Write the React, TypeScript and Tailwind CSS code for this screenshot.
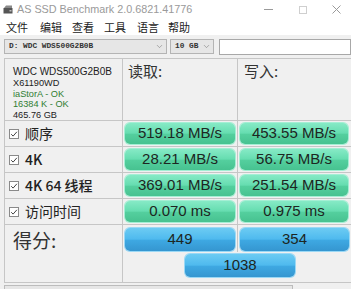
import { ChevronDown } from "lucide-react";

const cjk = "font-['Noto_Sans_CJK_SC',sans-serif]";
const sans = "font-['Liberation_Sans','Noto_Sans_CJK_SC',sans-serif]";

const green =
    "bg-[linear-gradient(to_bottom,#86eac6_0%,#66ddb0_48%,#54cf9e_54%,#47c290_100%)] shadow-[0_0_0_1px_#a4efd4]";
const blue =
    "bg-[linear-gradient(to_bottom,#6ccbf3_0%,#4fbaee_48%,#3ea8e2_54%,#3596d0_100%)] shadow-[0_0_0_1px_#9ad8f5]";

const Bar = ({ value, score = false }: { value: string; score?: boolean }) => (
    <div
        className={`h-full rounded-[5px] flex items-center justify-center text-[15px] text-[#1d2622] ${sans} ${score ? blue : green}`}
    >
        {value}
    </div>
);

const Check = () => (
    <svg width="10" height="10" viewBox="0 0 10 10" className="shrink-0">
        <rect x="0.5" y="0.5" width="9" height="9" fill="#fff" stroke="#8a8a8a" />
        <path d="M2.2 5.2 L4.1 7.1 L7.9 2.8" fill="none" stroke="#444" strokeWidth="1" />
    </svg>
);

const rows = [
    { label: "顺序", read: "519.18 MB/s", write: "453.55 MB/s", bold: false },
    { label: "4K", read: "28.21 MB/s", write: "56.75 MB/s", bold: true },
    { label: "4K 64 线程", read: "369.01 MB/s", write: "251.54 MB/s", bold: true },
    { label: "访问时间", read: "0.070 ms", write: "0.975 ms", bold: false },
];

const menus = [
    { name: "文件", w: "w-[34px]" },
    { name: "编辑", w: "w-[32px]" },
    { name: "查看", w: "w-[32px]" },
    { name: "工具", w: "w-[33px]" },
    { name: "语言", w: "w-[31px]" },
    { name: "帮助", w: "w-[30px]" },
];

const App = () => {
    return (
        <div className="w-[351px] h-[289px] overflow-hidden bg-[#f0f0f0] flex flex-col">
            {/* title bar */}
            <div className="h-[19px] bg-white flex items-center shrink-0">
                <svg width="10" height="9" viewBox="0 0 10 9" className="ml-[3px]">
                    <path d="M1 3 L3 0.5 H9 L9 3 Z" fill="#8a8a8a" />
                    <rect x="0.5" y="3" width="9" height="5.5" fill="#555" />
                    <rect x="6.5" y="5" width="2" height="1.5" fill="#bbb" />
                </svg>
                <span className={`ml-[4px] text-[10.8px] text-[#9a9a9a] ${sans}`}>
                    AS SSD Benchmark 2.0.6821.41776
                </span>
                <div className="ml-auto flex items-center">
                    <div className="w-[9px] h-px bg-[#9a9a9a]" />
                    <div className="ml-[26px] w-[8px] h-[8px] border border-[#cfcfcf]" />
                    <svg width="9" height="9" viewBox="0 0 9 9" className="ml-[25px] mr-[10px]">
                        <path d="M0.5 0.5 L8.5 8.5 M8.5 0.5 L0.5 8.5" stroke="#9a9a9a" strokeWidth="1" />
                    </svg>
                </div>
            </div>

            {/* menu bar */}
            <div className={`h-[16px] bg-white flex items-center pl-[6px] text-[11px] text-[#222] ${cjk} shrink-0`}>
                {menus.map((m) => (
                    <span key={m.name} className={m.w}>
                        {m.name}
                    </span>
                ))}
            </div>

            {/* drive selectors */}
            <div className="h-[21px] flex items-center pl-[4px] gap-[3px] shrink-0 pt-[2px]">
                <div className="w-[163px] h-[15px] bg-[#e6e6e6] border border-[#b4b4b4] flex items-center pl-[4px] pr-[2px]">
                    <span className="text-[7.8px] font-bold text-[#333] font-['Liberation_Mono',monospace]">
                        D: WDC WDS500G2B0B
                    </span>
                    <ChevronDown size={9} className="ml-auto text-[#777]" strokeWidth={1.5} />
                </div>
                <div className="w-[44px] h-[15px] bg-[#e6e6e6] border border-[#b4b4b4] flex items-center pl-[4px] pr-[2px]">
                    <span className="text-[7.8px] font-bold text-[#333] font-['Liberation_Mono',monospace]">10 GB</span>
                    <ChevronDown size={9} className="ml-auto text-[#777]" strokeWidth={1.5} />
                </div>
                <div className="flex-1 h-[16px] bg-white border border-[#a8a8a8] ml-[2px]" />
            </div>

            {/* results table */}
            <div className="ml-[4px] mt-[2px] grid grid-cols-[118px_115px_114px] grid-rows-[62px_26px_26px_26px_26px_58px] border-l border-t border-[#c6c6c6]">
                <div className={`border-r border-b border-[#c6c6c6] pl-[8px] pt-[7px] flex flex-col text-[9.2px] leading-[10.6px] text-[#222] ${sans}`}>
                    <span className="text-[10px] leading-[12px]">WDC WDS500G2B0B</span>
                    <span>X61190WD</span>
                    <span className="text-[#2f7d32]">iaStorA - OK</span>
                    <span className="text-[#2f7d32]">16384 K - OK</span>
                    <span>465.76 GB</span>
                </div>
                <div className={`border-r border-b border-[#c6c6c6] pl-[5px] pt-[1px] text-[15px] text-[#333] ${cjk}`}>
                    读取:
                </div>
                <div className={`border-r border-b border-[#c6c6c6] pl-[6px] pt-[1px] text-[15px] text-[#333] ${cjk}`}>
                    写入:
                </div>

                {rows.map((r) => (
                    <div key={r.label} className="contents">
                        <div className="border-r border-b border-[#c6c6c6] flex items-center pl-[4px] gap-[6px]">
                            <Check />
                            <span
                                className={`text-[14px] text-[#222] ${r.bold ? "font-medium" : ""} ${cjk}`}
                            >
                                {r.label}
                            </span>
                        </div>
                        <div className="border-r border-b border-[#c6c6c6] px-[2px] py-[2px]">
                            <Bar value={r.read} />
                        </div>
                        <div className="border-r border-b border-[#c6c6c6] pl-[2px] pr-[3px] py-[2px]">
                            <Bar value={r.write} />
                        </div>
                    </div>
                ))}

                <div className={`border-r border-b border-[#c6c6c6] pl-[8px] pt-[1px] text-[19px] text-[#333] ${cjk}`}>
                    得分:
                </div>
                <div className="col-span-2 border-r border-b border-[#c6c6c6] flex flex-col">
                    <div className="grid grid-cols-[115px_114px] h-[25px]">
                        <div className="border-r border-[#c6c6c6] px-[2px] pt-[3px] pb-[1px]">
                            <Bar value="449" score />
                        </div>
                        <div className="pl-[2px] pr-[3px] pt-[3px] pb-[1px]">
                            <Bar value="354" score />
                        </div>
                    </div>
                    <div className="ml-[62px] mt-[4px] w-[110px] h-[23px]">
                        <Bar value="1038" score />
                    </div>
                </div>
            </div>

            {/* progress bar */}
            <div className="ml-[4px] mt-[2px] flex items-start">
                <div className="w-[289px] h-[10px] bg-[#e6e6e6] border border-[#bcbcbc]" />
            </div>
        </div>
    );
};

export default App;
